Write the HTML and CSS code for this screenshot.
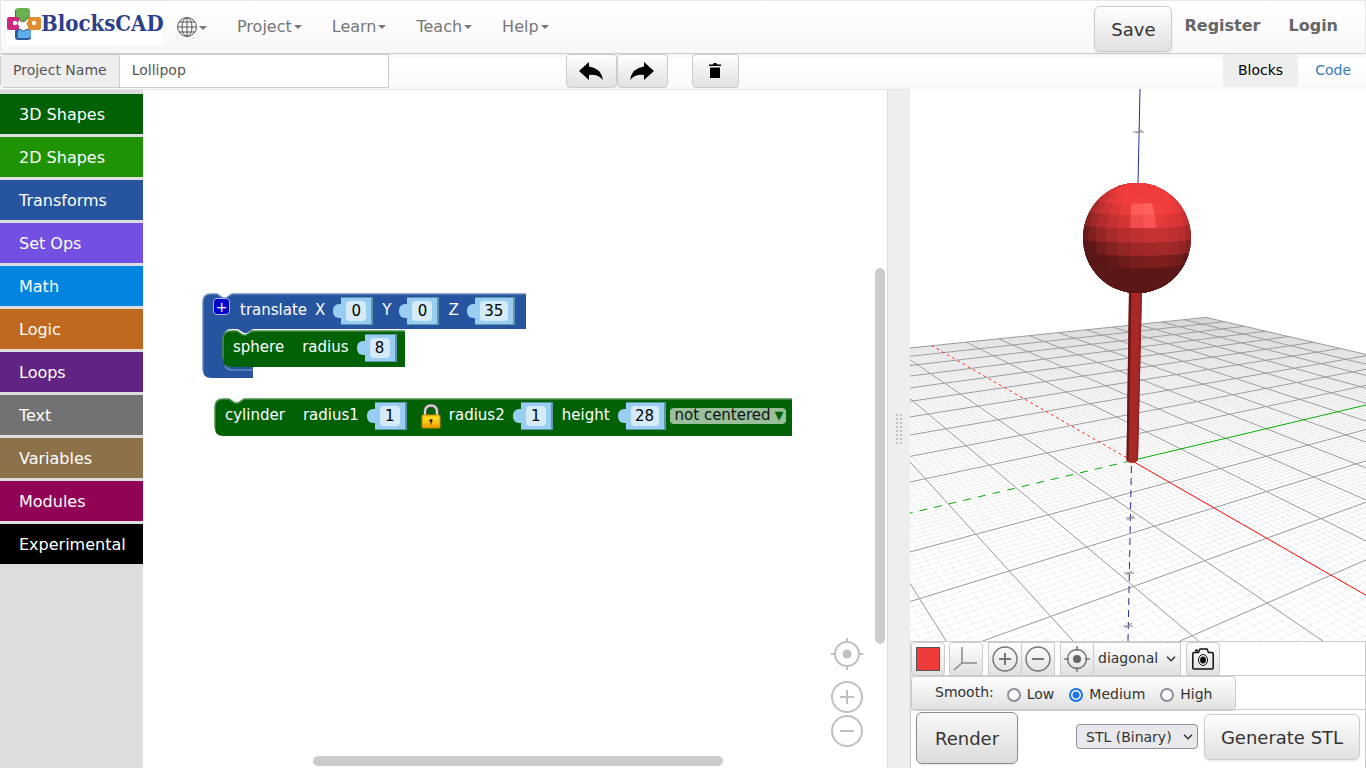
FILE: index.html
```html
<!DOCTYPE html>
<html lang="en">
<head>
<meta charset="utf-8">
<title>BlocksCAD</title>
<link rel="stylesheet" href="styles.css">
</head>
<body>
<div class="app">
  <header class="navbar">
    <a class="brand" href="#" aria-label="BlocksCAD home">
      <svg class="brand-mark" viewBox="0 0 36 34" width="36" height="34" aria-hidden="true">
        <path d="M10 2h11q3 0 3 3v6l-3 1q-1 3-4 3t-4-3l-4-1V5q0-3 1-3z" fill="#3c7a3a"/>
        <path d="M12 1h9q3 0 3 3v6l-4 1q0 3-3 3t-3-3l-4-1V4q0-3 2-3z" fill="#6cb054"/>
        <path d="M10 22h5q2 3 5 0h3q2 0 2 3v5q0 3-3 3H12q-3 0-3-3v-6z" fill="#285a9c"/>
        <path d="M13 23h2q2 3 5 0h3q2 0 2 2v3q0 3-3 3H12q-1-6 1-8z" fill="#62aceb"/>
        <path d="M3 10h8q2 0 2 2v2q-3 2 0 5v2q0 2-2 2H3q-2 0-2-2v-9q0-2 2-2z" fill="#cf2680"/>
        <circle cx="9" cy="16" r="2.200" fill="#fff"/>
        <path d="M24 10h9q2 0 2 2v9q0 2-2 2h-9q-2 0-2-2v-2q-3-2 0-5v-2q0-2 2-2z" fill="#df8c2e"/>
        <circle cx="28" cy="16" r="2.200" fill="#fff"/>
      </svg>
      <span class="brand-name">BlocksCAD</span>
    </a>
    <nav class="menu" aria-label="Main">
      <button class="menu-item menu-lang" aria-label="Language">
        <svg width="20" height="20" viewBox="0 0 20 20" fill="none" stroke="#555" aria-hidden="true">
          <circle cx="10" cy="10" r="9.4"/><ellipse cx="10" cy="10" rx="5" ry="9.4"/>
          <path d="M10 0v20M1 10h18M2 5h16M2 15h16"/>
        </svg><i class="caret"></i>
      </button>
      <button class="menu-item">Project<i class="caret"></i></button>
      <button class="menu-item">Learn<i class="caret"></i></button>
      <button class="menu-item">Teach<i class="caret"></i></button>
      <button class="menu-item">Help<i class="caret"></i></button>
    </nav>
    <div class="account">
      <button class="btn btn-large btn-save">Save</button>
      <a class="account-link" href="#">Register</a>
      <a class="account-link" href="#">Login</a>
    </div>
  </header>

  <div class="subbar">
    <div class="project-name">
      <label class="project-label" for="project">Project Name</label>
      <input class="project-input" id="project" type="text" value="Lollipop">
    </div>
    <div class="edit-actions">
      <button class="btn edit-btn" aria-label="Undo">
        <svg width="24" height="20" viewBox="0 0 24 20" aria-hidden="true"><path d="M0 10 10 1v4.500Q22 7 24 19 19 13 10 14v5z"/></svg>
      </button>
      <button class="btn edit-btn" aria-label="Redo">
        <svg width="24" height="20" viewBox="0 0 24 20" aria-hidden="true"><path d="M24 10 14 1v4.500Q2 7 0 19 5 13 14 14v5z"/></svg>
      </button>
      <button class="btn edit-btn trash-btn" aria-label="Delete all blocks">
        <svg width="12" height="16" viewBox="0 0 12 16" aria-hidden="true"><path d="M0 1.500h3.500L5 0h2l1.500 1.500H12V3H0zM1 4.500h10V15H1z"/></svg>
      </button>
    </div>
    <div class="view-tabs" role="tablist">
      <button class="tab tab-active" role="tab" aria-selected="true">Blocks</button>
      <button class="tab" role="tab" aria-selected="false">Code</button>
    </div>
  </div>

  <main class="main">
    <nav class="toolbox" aria-label="Block categories">
      <button class="category cat-3d">3D Shapes</button>
      <button class="category cat-2d">2D Shapes</button>
      <button class="category cat-transforms">Transforms</button>
      <button class="category cat-setops">Set Ops</button>
      <button class="category cat-math">Math</button>
      <button class="category cat-logic">Logic</button>
      <button class="category cat-loops">Loops</button>
      <button class="category cat-text">Text</button>
      <button class="category cat-variables">Variables</button>
      <button class="category cat-modules">Modules</button>
      <button class="category cat-experimental">Experimental</button>
    </nav>

    <section class="workspace" aria-label="Workspace">
      <div class="block block-translate">
        <svg class="block-shape" width="325" height="87" viewBox="0 0 325 87" aria-hidden="true">
          <path d="M1 9Q1 1 9 1h6l6 4h3l6-4h294v35H51l-6 4h-3l-6-4h-7q-7 0-7 8v20q0 10 8 10h21v11H9q-8 0-8-8z" fill="#26549f"/>
          <path d="M1 78V9Q1 1 9 1h6l6 4h3l6-4h294M23 72q1 5 8 5h20" fill="none" stroke="#6887c0" stroke-width="1.500"/>
        </svg>
        <div class="block-row">
          <button class="mutator" aria-label="Expand">+</button>
          <span class="field-label">translate</span>
          <label class="field-label" for="tx">X</label>
          <span class="socket"><input class="number" id="tx" type="text" value="0"></span>
          <label class="field-label" for="ty">Y</label>
          <span class="socket"><input class="number" id="ty" type="text" value="0"></span>
          <label class="field-label" for="tz">Z</label>
          <span class="socket"><input class="number number-wide" id="tz" type="text" value="35"></span>
        </div>
      </div>

      <div class="block block-sphere">
        <svg class="block-shape" width="184" height="38" viewBox="0 0 184 38" aria-hidden="true">
          <path d="M1 9Q1 1 9 1h6l6 4h3l6-4h153v36H9q-8 0-8-8z" fill="#006205"/>
          <path d="M1 29V9Q1 1 9 1h6l6 4h3l6-4h153" fill="none" stroke="#4d9150" stroke-width="1.500"/>
        </svg>
        <div class="block-row">
          <span class="field-label gap-wide">sphere</span>
          <label class="field-label" for="sr">radius</label>
          <span class="socket"><input class="number" id="sr" type="text" value="8"></span>
        </div>
      </div>

      <div class="block block-cylinder">
        <svg class="block-shape" width="579" height="39" viewBox="0 0 579 39" aria-hidden="true">
          <path d="M1 9Q1 1 9 1h6l6 4h3l6-4h548v37H9q-8 0-8-8z" fill="#006205"/>
          <path d="M1 30V9Q1 1 9 1h6l6 4h3l6-4h548" fill="none" stroke="#4d9150" stroke-width="1.500"/>
        </svg>
        <div class="block-row">
          <span class="field-label gap-wide">cylinder</span>
          <label class="field-label" for="r1">radius1</label>
          <span class="socket"><input class="number" id="r1" type="text" value="1"></span>
          <svg class="lock" width="20" height="26" viewBox="0 0 20 26" aria-hidden="true">
            <defs><linearGradient id="gold" x2="0" y2="1"><stop offset="0" stop-color="#fcc419"/><stop offset=".3" stop-color="#ffd91c"/><stop offset="1" stop-color="#f29800"/></linearGradient></defs>
            <path d="M4 13V9Q4 2.500 10 2.500T16 9v4" fill="none" stroke="#555" stroke-width="4"/>
            <path d="M4 13V9Q4 2.500 10 2.500T16 9v4" fill="none" stroke="#ddd" stroke-width="2"/>
            <rect x="1" y="12" width="18" height="13" rx="1" fill="url(#gold)" stroke="#c98a00"/>
            <circle cx="10" cy="17.500" r="1.600" fill="#222"/><path d="M9.500 18h1v4l-1-1z" fill="#222"/>
          </svg>
          <label class="field-label" for="r2">radius2</label>
          <span class="socket"><input class="number" id="r2" type="text" value="1"></span>
          <label class="field-label" for="ch">height</label>
          <span class="socket"><input class="number number-wide" id="ch" type="text" value="28"></span>
          <span class="center-field">
            <select class="center-select" aria-label="Centering"><option>not centered</option><option>centered</option></select>
            <span class="center-arrow" aria-hidden="true">▾</span>
          </span>
        </div>
      </div>

      <div class="zoom-controls">
        <button class="zoom-btn zoom-center" aria-label="Center">
          <svg width="32" height="32" viewBox="0 0 32 32" fill="none" stroke="#c0c0c0" stroke-width="2"><circle cx="16" cy="16" r="12"/><path d="M16 0v5M16 27v5M0 16h5M27 16h5"/><circle cx="16" cy="16" r="4.500" fill="#c0c0c0" stroke="none"/></svg>
        </button>
        <button class="zoom-btn" aria-label="Zoom in">
          <svg width="32" height="32" viewBox="0 0 32 32" fill="none" stroke="#c0c0c0" stroke-width="2"><circle cx="16" cy="16" r="15"/><path d="M9 16h14M16 9v14"/></svg>
        </button>
        <button class="zoom-btn" aria-label="Zoom out">
          <svg width="32" height="32" viewBox="0 0 32 32" fill="none" stroke="#c0c0c0" stroke-width="2"><circle cx="16" cy="16" r="15"/><path d="M9 16h14"/></svg>
        </button>
      </div>
      <div class="scroll-thumb scroll-vertical"></div>
      <div class="scroll-thumb scroll-horizontal"></div>
    </section>

    <div class="splitter" role="separator">
      <svg width="6" height="30" viewBox="0 0 6 30" fill="#c4c4c4" aria-hidden="true"><path d="M0 0h2v2H0zM4 0h2v2H4zM0 4h2v2H0zM4 4h2v2H4zM0 8h2v2H0zM4 8h2v2H4zM0 12h2v2H0zM4 12h2v2H4zM0 16h2v2H0zM4 16h2v2H4zM0 20h2v2H0zM4 20h2v2H4zM0 24h2v2H0zM4 24h2v2H4zM0 28h2v2H0zM4 28h2v2H4z"/></svg>
    </div>

    <section class="viewer" aria-label="3D view">
      <div class="viewport">
        <svg class="scene" id="scene" viewBox="910 89 456 552" preserveAspectRatio="xMidYMid slice" role="img" aria-label="Lollipop model">
          <clipPath id="round"><ellipse cx="1137" cy="238" rx="54" ry="55"/></clipPath>
          <path id="minor" fill="none" stroke="#000" stroke-opacity=".08" stroke-width=".8"/>
          <path id="major" fill="none" stroke="#999"/>
          <path d="M1128 641 1131.500 462" stroke="#2c2c8c" stroke-dasharray="7 5"/>
          <path d="M1138 184 1140 89" stroke="#2c2c9c"/>
          <path d="M1133 132h11M1136 133l6-3M1126 518h9M1127 520l7-4M1124 573h10M1126 575l6-4M1123 626h10M1125 628l7-5" stroke="#888"/>
          <path id="xneg" stroke="#f22" stroke-dasharray="3 3"/>
          <path id="xpos" stroke="#f00"/>
          <path id="yneg" stroke="#0a0" stroke-dasharray="8 7"/>
          <path id="ypos" stroke="#0a0"/>
          <path d="M1129 290h13l-4 169q0 3-5 4-6 0-6.500-3z" fill="#a82828"/>
          <path d="M1129 290h2.500l-3 171-2-1z" fill="#641818"/>
          <path d="M1140.500 290h1.500l-4 169-1.500 1z" fill="#8e2222"/>
          <g id="ball" clip-path="url(#round)"></g>
        </svg>
      </div>

      <div class="panel-row tool-row">
        <button class="btn tool" aria-label="Model colour"><span class="swatch"></span></button>
        <button class="btn tool" aria-label="Toggle axes">
          <svg width="26" height="26" viewBox="0 0 26 26" fill="none" stroke="#888" stroke-width="1.500"><path d="M9 1v16h15M9 17l-8 7"/></svg>
        </button>
        <div class="tool-group">
          <button class="btn tool" aria-label="Zoom in view">
            <svg width="26" height="26" viewBox="0 0 26 26" fill="none" stroke="#777" stroke-width="2"><circle cx="13" cy="13" r="12" stroke-width="1.500"/><path d="M7 13h12M13 7v12"/></svg>
          </button>
          <button class="btn tool" aria-label="Zoom out view">
            <svg width="26" height="26" viewBox="0 0 26 26" fill="none" stroke="#777" stroke-width="2"><circle cx="13" cy="13" r="12" stroke-width="1.500"/><path d="M7 13h12"/></svg>
          </button>
        </div>
        <div class="tool-group">
          <button class="btn tool" aria-label="Reset view">
            <svg width="26" height="26" viewBox="0 0 26 26" fill="none" stroke="#777" stroke-width="1.500"><circle cx="13" cy="13" r="9.500"/><path d="M13 0v5M13 21v5M0 13h5M21 13h5"/><circle cx="13" cy="13" r="4" fill="#666" stroke="none"/></svg>
          </button>
          <span class="select-wrap">
            <select class="btn view-select" aria-label="View angle"><option>diagonal</option><option>top</option><option>front</option></select>
            <svg class="chevron" width="10" height="6" viewBox="0 0 10 6" fill="none" stroke="#333" stroke-width="1.500" aria-hidden="true"><path d="M1 .800 5 4.800 9 .800"/></svg>
          </span>
        </div>
        <button class="btn tool tool-camera" aria-label="Take picture">
          <svg width="22" height="22" viewBox="0 0 22 22" fill="none" stroke="#111" stroke-width="1.500"><path d="M2 4.500h4.500L8 1h7l1.500 3.500H20q1.200 0 1.200 1.200V20q0 1-1.200 1H2Q.8 21 .8 20V5.700Q.8 4.500 2 4.500z"/><path d="M3 2.500h3" stroke-width="2"/><ellipse cx="11" cy="12" rx="4.500" ry="5.500" stroke-width="1"/><ellipse cx="11" cy="12" rx="2.200" ry="2.800" fill="#000"/></svg>
        </button>
      </div>

      <div class="panel-row">
        <fieldset class="smooth">
          <legend class="smooth-legend">Smooth:</legend>
          <label class="radio-label"><input class="radio" type="radio" name="smooth">Low</label>
          <label class="radio-label"><input class="radio" type="radio" name="smooth" checked>Medium</label>
          <label class="radio-label"><input class="radio" type="radio" name="smooth">High</label>
        </fieldset>
      </div>

      <div class="render-row">
        <button class="btn btn-large btn-render">Render</button>
        <span class="select-wrap format-wrap">
          <select class="format-select" aria-label="Export format"><option>STL (Binary)</option><option>STL (ASCII)</option></select>
          <svg class="chevron" width="10" height="6" viewBox="0 0 10 6" fill="none" stroke="#333" stroke-width="1.500" aria-hidden="true"><path d="M1 .800 5 4.800 9 .800"/></svg>
        </span>
        <button class="btn btn-large btn-generate">Generate STL</button>
      </div>
    </section>
  </main>
</div>
<script src="scene.js"></script>
</body>
</html>
```
FILE: styles.css
```css
* { box-sizing: border-box; }

body {
  margin: 0;
  font-family: "DejaVu Sans", Verdana, sans-serif;
  font-size: 14px;
  color: #333;
}

button, input, select { font: inherit; color: inherit; margin: 0; }
button { padding: 0; border: 0; background: none; cursor: pointer; }
svg { display: block; flex: none; }

.app { display: flex; flex-direction: column; height: 100vh; overflow: hidden; }

.btn {
  display: flex;
  align-items: center;
  justify-content: center;
  border: 1px solid #ccc;
  border-radius: 4px;
  background: linear-gradient(#fff, #e0e0e0);
}
.btn-large { font-size: 18px; border-radius: 6px; box-shadow: 0 1px 2px rgba(0, 0, 0, .1); }

/* Top navigation */
.navbar {
  display: flex;
  flex: none;
  height: 54px;
  border: 1px solid #e7e7e7;
  border-bottom-color: #ccc;
  background: linear-gradient(#fff, #f7f7f7);
}
.brand { display: flex; margin: 5px 0 0 5px; width: 157px; height: 39px; background: #fff; text-decoration: none; }
.brand-mark { margin-top: 1px; }
.brand-name {
  margin-left: -1px;
  font: bold 22px/34px "DejaVu Serif Condensed", "DejaVu Serif", serif;
  color: #2c3f8c;
}
.menu { display: flex; gap: 30px; margin-left: 14px; height: 50px; }
.menu-item { display: flex; align-items: center; font-size: 16px; color: #777; }
.menu-lang { padding-top: 2px; }
.caret { margin: 2px 0 0 2px; border: 4px solid transparent; border-top-color: #777; border-bottom: 0; }
.account { display: flex; align-items: flex-start; margin-left: auto; }
.btn-save { width: 78px; height: 46px; margin: 5px 12px 0 0; }
.account-link { margin-right: 28px; font-weight: bold; font-size: 16px; line-height: 50px; color: #666; text-decoration: none; }
.account-link:last-child { margin-right: 27px; }

/* Project bar */
.subbar {
  display: grid;
  grid-template-columns: 1fr auto 1fr;
  flex: none;
  height: 36px;
  border-bottom: 1px solid #e7e7e7;
  background: linear-gradient(#f5f5f5, #fff 20%, #f9f9f9);
}
.project-name { display: flex; height: 34px; max-width: 389px; border: 1px solid #ccc; border-radius: 4px 0 0 4px; }
.project-label { padding: 0 12px; line-height: 31px; background: #eee; border-right: 1px solid #ccc; color: #555; }
.project-input { flex: 1; min-width: 0; padding: 0 12px 2px; border: 0; background: #fff; color: #555; }
.edit-actions { display: flex; height: 34px; margin-right: 62px; }
.edit-btn { width: 51px; }
.trash-btn { width: 47px; margin-left: 24px; }
.view-tabs { display: flex; justify-content: flex-end; gap: 2px; height: 33px; }
.tab { padding: 0 15px 2px; border-radius: 4px; color: #337ab7; }
.tab-active { background: #eee; color: #000; }

/* Work area */
.main {
  display: grid;
  grid-template-columns: 143px minmax(0, 744fr) 23px minmax(0, 456fr);
  flex: 1;
  min-height: 0;
}
.toolbox { display: flex; flex-direction: column; gap: 3px; padding-top: 4px; background: #ddd; }
.category { height: 40px; padding-left: 19px; text-align: left; font-size: 16px; color: #fff; }
.cat-3d { background: #006205; }
.cat-2d { background: #209303; }
.cat-transforms { background: #26549e; }
.cat-setops { background: #7450e2; }
.cat-math { background: #0185e1; }
.cat-logic { background: #bf6920; }
.cat-loops { background: #612485; }
.cat-text { background: #727272; }
.cat-variables { background: #8c7149; }
.cat-modules { background: #900355; }
.cat-experimental { background: #000; }

.workspace { position: relative; overflow: hidden; background: #fff; }

/* Blocks sit freely on the workspace canvas */
.block { position: absolute; color: #fff; font-size: 15px; }
.block-translate { left: 59px; top: 203px; width: 325px; }
.block-sphere { left: 79px; top: 240px; width: 184px; }
.block-cylinder { left: 71px; top: 308px; width: 579px; }
.block-shape { position: absolute; left: 0; top: 0; }
.block-row { position: relative; display: flex; align-items: center; height: 36px; padding-left: 11px; }
.field-label { line-height: 20px; padding-bottom: 3px; margin-right: 8px; }
.gap-wide { margin-right: 18px; }
.mutator {
  width: 17px;
  height: 17px;
  margin: 0 10px 9px 0;
  border: 1px solid #aab8e0;
  border-radius: 4px;
  background: #00c;
  color: #fff;
  font-size: 14px;
  line-height: 14px;
}
.socket {
  position: relative;
  display: flex;
  align-items: center;
  height: 28px;
  margin: 0 9px 0 8px;
  padding: 0 5px;
  border: solid #5f94ad;
  border-width: 1px 2px 1px 0;
  background: #99cdf2;
}
.socket::before {
  content: "";
  position: absolute;
  left: -8px;
  top: 6px;
  width: 10px;
  height: 14px;
  border-radius: 6px 2px 2px 6px;
  background: #99cdf2;
}
.number { width: 20px; height: 20px; padding: 0; border: 0; border-radius: 4px; background: #d6ebfa; color: #000; text-align: center; }
.number-wide { width: 28px; }
.lock { margin: 0 8px 0 5px; }
.center-field { position: relative; margin-left: -5px; }
.center-select {
  display: block;
  appearance: none;
  width: 116px;
  height: 16px;
  padding: 0 0 1px 5px;
  border: 0;
  border-radius: 4px;
  background: #99c09b;
  color: #111;
  line-height: 15px;
}
.center-arrow { position: absolute; right: 2px; top: -1px; font-size: 18px; line-height: 16px; color: #006205; pointer-events: none; }

.zoom-controls { position: absolute; right: 24px; bottom: 21px; display: flex; flex-direction: column; gap: 2px; }
.zoom-center { margin-bottom: 9px; }
.scroll-thumb { position: absolute; border-radius: 5px; background: #ccc; }
.scroll-vertical { right: 2px; top: 178px; width: 10px; height: 376px; }
.scroll-horizontal { left: 170px; bottom: 2px; width: 410px; height: 10px; }

.splitter { display: flex; align-items: center; justify-content: center; border-left: 1px solid #ddd; background: #eee; }

/* Viewer */
.viewer { display: flex; flex-direction: column; min-width: 0; margin-top: -1px; background: #fff; }
.viewport { flex: 1; min-height: 0; overflow: hidden; }
.scene { width: 100%; height: 100%; }
.panel-row { display: flex; flex: none; height: 34px; border: 1px solid #ccc; border-bottom: 0; }
.tool-row { gap: 4px; }
.tool { width: 34px; height: 34px; }
.tool-group { display: flex; margin-left: 1px; }
.tool-group .btn { border-radius: 0; }
.tool-group .tool + .tool { width: 33px; border-left: 0; }
.tool-camera { margin-left: 1px; }
.swatch { width: 24px; height: 24px; border: 1px solid #555; background: #ef3b3b; }
.select-wrap { position: relative; }
.chevron { position: absolute; right: 5px; top: 50%; margin-top: -3px; pointer-events: none; }
.view-select { appearance: none; width: 87px; height: 34px; padding: 0 0 3px 4px; border-left: 0; }
.smooth {
  display: flex;
  align-items: center;
  min-width: 0;
  width: 325px;
  height: 35px;
  margin: 0;
  padding: 0 0 0 23px;
  border: 1px solid #ccc;
  border-radius: 4px;
  background: linear-gradient(#fff, #e0e0e0);
}
.smooth-legend { float: left; padding: 0 13px 3px 0; }
.radio-label { display: flex; align-items: center; gap: 6px; margin-right: 15px; }
.radio { width: 14px; height: 14px; margin-top: 3px; appearance: none; border: 2px solid #8f8f9d; border-radius: 50%; background: #fff; }
.radio:checked { border-color: #1a73e8; background: radial-gradient(#1a73e8 0 3px, #fff 4px); }
.render-row { display: flex; flex: none; align-items: center; height: 59px; padding: 0 5px 2px; border: solid #ccc; border-width: 1px 1px 0; }
.btn-render { width: 102px; height: 52px; border-color: #8c8c8c; background: linear-gradient(#f8f8f8, #dcdcdc); }
.format-wrap { margin: 0 6px 3px auto; }
.format-select { display: block; appearance: none; width: 122px; height: 25px; padding: 0 9px; border: 1px solid #8f8f9d; border-radius: 4px; background: #e9e9ed; }
.btn-generate { width: 156px; height: 46px; margin-bottom: 2px; }
```
FILE: scene.js
```js
(function () {
  // Perspective map of the ground plane; one unit is one major grid cell.
  function weight(x, y) { return 1 - 0.07478 * x + 0.05105 * y; }
  function project(x, y) {
    var w = weight(x, y);
    return ((1131.6 - 49.68 * x + 109.5 * y) / w).toFixed(2) + ' ' +
           ((460.6 - 14.37 * x + 11.25 * y) / w).toFixed(2);
  }
  function line(x0, y0, x1, y1) {
    var near = 0.15, a = weight(x0, y0), b = weight(x1, y1), t;
    if (a < near && b < near) return '';
    if (a < near) { t = (near - a) / (b - a); x0 += (x1 - x0) * t; y0 += (y1 - y0) * t; }
    if (b < near) { t = (near - a) / (b - a); x1 = x0 + (x1 - x0) * t; y1 = y0 + (y1 - y0) * t; }
    return 'M' + project(x0, y0) + 'L' + project(x1, y1);
  }
  function set(id, d) { document.getElementById(id).setAttribute('d', d); }

  var minor = '', major = '';
  for (var i = -100; i <= 100; i++) {
    var v = i / 10;
    var d = (i === 0 ? '' : line(v, -10, v, 10) + line(-10, v, 10, v));
    if (i % 10) minor += d; else major += d;
  }
  set('minor', minor);
  set('major', major);
  set('xneg', line(0, 0, -10, 0));
  set('xpos', line(0, 0, 8, 0));
  set('yneg', line(0, 0, 0, -6));
  set('ypos', line(0, 0, 0, 10));

  // Faceted ball, flat shaded.
  var step = Math.PI / 13, tilt = 0.073, L = [0.2, 0.8, 0.56], H = [0.12, 0.42, 0.9];
  function vert(lat, az) {
    lat = Math.max(-Math.PI / 2, Math.min(Math.PI / 2, lat));
    var x = Math.cos(lat) * Math.sin(az), y = Math.sin(lat), z = Math.cos(lat) * Math.cos(az);
    return [x, y * Math.cos(tilt) - z * Math.sin(tilt), z * Math.cos(tilt) + y * Math.sin(tilt)];
  }
  function dot(a, b) { return a[0] * b[0] + a[1] * b[1] + a[2] * b[2]; }
  var out = '';
  for (var r = -7; r < 7; r++) {
    for (var c = 0; c < 26; c++) {
      var a0 = (c - 0.5) * step, a1 = a0 + step, l0 = r * step, l1 = l0 + step;
      var n = vert(l0 + step / 2, a0 + step / 2);
      if (n[2] < -0.2) continue;
      var k = Math.min(1, 0.38 + 0.7 * Math.max(0, dot(n, L)));
      var s = Math.pow(Math.max(0, dot(n, H)), 60) * 60;
      var red = Math.min(255, Math.round(240 * k + s)), other = Math.round(60 * k + s);
      var col = 'rgb(' + red + ',' + other + ',' + other + ')';
      var pts = [vert(l0, a0), vert(l0, a1), vert(l1, a1), vert(l1, a0)].map(function (p) {
        return (1137 + 55 * p[0]).toFixed(1) + ',' + (238 - 56 * p[1]).toFixed(1);
      }).join(' ');
      out += '<polygon points="' + pts + '" fill="' + col + '" stroke="' + col + '" stroke-width="1" data-z="' + n[2] + '"/>';
    }
  }
  var ball = document.getElementById('ball');
  ball.innerHTML = out;
  Array.from(ball.children)
    .sort(function (p, q) { return p.dataset.z - q.dataset.z; })
    .forEach(function (p) { ball.appendChild(p); });
})();
```
